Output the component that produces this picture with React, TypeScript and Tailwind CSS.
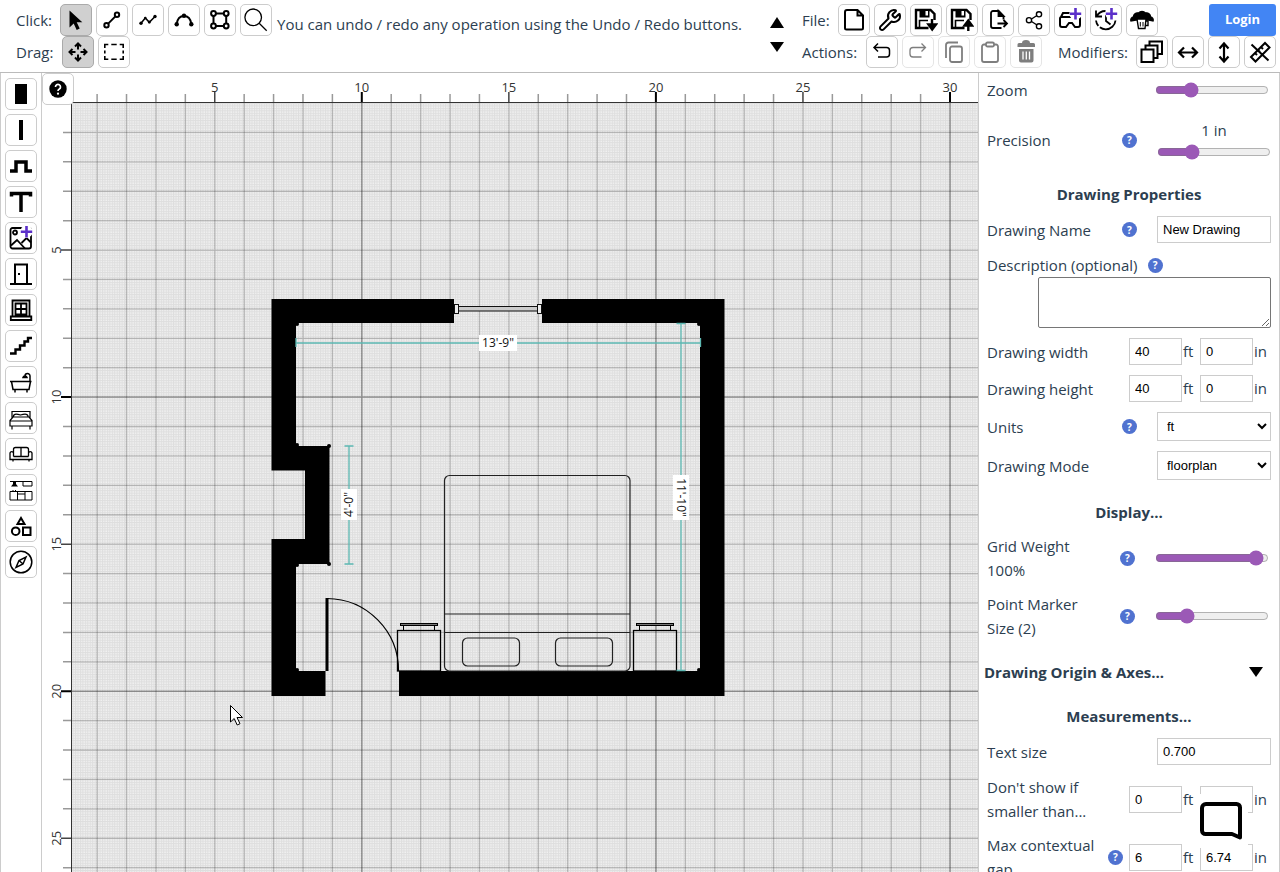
import { useState } from "react";
import type { ReactNode } from "react";
import { Wrench } from "lucide-react";

type ToolProps = {
  label: string;
  active?: boolean;
  disabled?: boolean;
  children: ReactNode;
};

const FOOT = 29.41;
const ORIGIN_X = 67.7;
const ORIGIN_Y = 103;
const FEET = Array.from({ length: 80 }, (_, i) => i + 1);
const LAST_LABEL_X = 30;
const LAST_LABEL_Y = 25;

const Tool: React.FC<ToolProps> = ({ label, active, disabled, children }) => (
  <button
    type="button"
    aria-label={label}
    disabled={disabled}
    className={`flex size-8 shrink-0 items-center justify-center rounded-[5px] border text-black ${
      active ? "border-[#aaa] bg-[#d0d0d0]" : "border-[#ccc] bg-white"
    } ${disabled ? "opacity-50" : ""}`}
  >
    {children}
  </button>
);

const Icon: React.FC<{ width?: number; children: ReactNode }> = ({
  width = 2,
  children,
}) => (
  <svg
    className="size-6"
    viewBox="0 0 24 24"
    fill="none"
    stroke="currentColor"
    strokeWidth={width}
  >
    {children}
  </svg>
);

const Plus: React.FC = () => (
  <g stroke="none">
    <circle cx="17.5" cy="5.7" r="6.2" fill="#fff" />
    <path d="M17.5 0v11.4M11.8 5.7h11.4" stroke="#5b2fc9" strokeWidth="2.6" />
  </g>
);

const Floppy: React.FC<{ children: ReactNode }> = ({ children }) => (
  <Icon width={2.4}>
    <path d="M20.500 12V6L16.500 2H2v18h12.500" />
    <path d="M5.500 2h10v7.500h-10z" fill="currentColor" stroke="none" />
    <path d="M11.500 3h2.500v4.500h-2.500z" fill="#fff" stroke="none" />
    <path d="M5.500 19v-6.500H14" strokeWidth="1.6" />
    {children}
  </Icon>
);

const Help: React.FC = () => (
  <button
    type="button"
    aria-label="Help"
    className="flex size-[15px] shrink-0 items-center justify-center rounded-full bg-[#5072d0] text-[10px] leading-none font-bold text-white"
  >
    ?
  </button>
);

const Heading: React.FC<{ children: ReactNode }> = ({ children }) => (
  <h2 className="mt-2.5 text-center leading-6 font-bold">{children}</h2>
);

const Row: React.FC<{
  label: string;
  htmlFor: string;
  help?: boolean;
  tight?: boolean;
  children: ReactNode;
}> = ({ label, htmlFor, help, tight, children }) => (
  <div className="flex items-center">
    <label htmlFor={htmlFor} className="max-w-[115px] leading-6">
      {label}
    </label>
    <div className={`ml-auto flex items-center ${tight ? "gap-1.5" : "gap-5"}`}>
      {help && <Help />}
      {children}
    </div>
  </div>
);

const Slider: React.FC<{ id: string; start: number }> = ({ id, start }) => {
  const [value, setValue] = useState<number>(start);
  return (
    <input
      id={id}
      type="range"
      min={0}
      max={100}
      value={value}
      onChange={(e) => setValue(Number(e.target.value))}
      className="h-4 w-[114px] accent-[#9b59b6]"
    />
  );
};

const TextField: React.FC<{ id: string; value: string }> = ({ id, value }) => (
  <input
    id={id}
    type="text"
    defaultValue={value}
    className="h-[27px] w-[114px] border border-[#ccc] bg-white px-[5px] font-['Liberation_Sans',sans-serif] text-[13px] text-black"
  />
);

const FeetField: React.FC<{ id: string; feet: string; inches: string }> = ({
  id,
  feet,
  inches,
}) => (
  <div className="flex w-[142px] items-center">
    <input
      id={id}
      type="text"
      defaultValue={feet}
      className="h-[27px] w-[53px] border border-[#ccc] bg-white px-[5px] font-['Liberation_Sans',sans-serif] text-[13px] text-black"
    />
    <span className="w-[18px] pl-px">ft</span>
    <input
      aria-label={`${id} inches`}
      type="text"
      defaultValue={inches}
      className="h-[27px] w-[53px] border border-[#ccc] bg-white px-[5px] font-['Liberation_Sans',sans-serif] text-[13px] text-black"
    />
    <span className="pl-px">in</span>
  </div>
);

const Select: React.FC<{ id: string; options: string[] }> = ({
  id,
  options,
}) => (
  <select
    id={id}
    className="h-[29px] w-[114px] border border-[#ccc] bg-white pl-[5px] font-['Liberation_Sans',sans-serif] text-[13px] text-black"
  >
    {options.map((option) => (
      <option key={option}>{option}</option>
    ))}
  </select>
);

const Toolbar: React.FC = () => (
  <header className="flex h-[73px] shrink-0 items-start border-b border-[#bbb] pt-1 pr-1 pl-4 whitespace-nowrap">
    <div>
      <div className="flex items-center gap-1">
        <span className="w-10">Click:</span>
        <Tool label="Select" active>
          <Icon>
            <path
              d="M5.500 2.500v17l4.200-4 3 6.500 3-1.400-3-6.300h5.600z"
              fill="currentColor"
              stroke="none"
            />
          </Icon>
        </Tool>
        <Tool label="Line">
          <Icon>
            <circle cx="6.5" cy="17.3" r="2.2" />
            <circle cx="17" cy="6.7" r="2.2" />
            <path d="M8.200 15.600l7.200-7.200" />
          </Icon>
        </Tool>
        <Tool label="Polyline">
          <Icon width={1.5}>
            <path d="M5 15.300l4.300-5.300 4 4.300L19 8.500" />
            <g fill="currentColor" stroke="none">
              <circle cx="5" cy="15.3" r="1.7" />
              <circle cx="9.3" cy="10" r="1.3" />
              <circle cx="13.3" cy="14" r="1.5" />
              <circle cx="19" cy="8.5" r="1.7" />
            </g>
          </Icon>
        </Tool>
        <Tool label="Arc">
          <Icon>
            <path d="M4.500 16.300C5.500 10 8.300 8 12 8s6.500 2 7.500 8.300" />
            <g fill="currentColor" stroke="none">
              <circle cx="4.7" cy="16.3" r="2.2" />
              <circle cx="12" cy="7.7" r="2.2" />
              <circle cx="19.3" cy="16.3" r="2.2" />
            </g>
          </Icon>
        </Tool>
        <Tool label="Area">
          <Icon>
            <path d="M8 5.500h8M8 18h8M5.500 8v7.500M18.200 8v7.500" />
            <circle cx="5.5" cy="5.5" r="2.4" />
            <circle cx="18.2" cy="5.5" r="2.4" />
            <circle cx="5.5" cy="18" r="2.4" />
            <circle cx="18.2" cy="18" r="2.4" />
          </Icon>
        </Tool>
        <Tool label="Search">
          <Icon width={1.3}>
            <circle cx="9.2" cy="9.3" r="8.3" />
            <path d="M15.200 15.300l7.500 7.500" />
          </Icon>
        </Tool>
      </div>
      <div className="flex items-center gap-1">
        <span className="w-[42px]">Drag:</span>
        <Tool label="Pan" active>
          <Icon>
            <path d="M12 3.500v6M12 14.500v6M3.500 12h6M14.500 12h6M9 6.500l3-3 3 3M9 17.500l3 3 3-3M6.500 9l-3 3 3 3M17.500 9l3 3-3 3" />
          </Icon>
        </Tool>
        <Tool label="Box select">
          <Icon width={1.6}>
            <path d="M2.800 8V4.500h3.500M9.300 4.500h5.400M17.700 4.500h3.500V8M21.200 10.500v3M21.200 16v3.300h-3.500M14.700 19.300H9.300M6.300 19.300H2.800V16M2.800 13.500v-3" />
          </Icon>
        </Tool>
      </div>
    </div>
    <p className="mt-2 min-w-0 flex-1 overflow-hidden pl-[5px] leading-6">
      You can undo / redo any operation using the Undo / Redo buttons.
    </p>
    <div className="mt-[13px] mr-[18px] flex flex-col gap-3">
      <button type="button" aria-label="Previous tip">
        <svg className="block h-3 w-3.5" viewBox="0 0 14 12">
          <path d="M7 0l7 11H0z" />
        </svg>
      </button>
      <button type="button" aria-label="Next tip">
        <svg className="block h-3 w-3.5" viewBox="0 0 14 12">
          <path d="M7 11l7-10H0z" />
        </svg>
      </button>
    </div>
    <div className="w-[474px] shrink-0">
      <div className="flex items-center gap-1">
        <span className="w-8">File:</span>
        <Tool label="New">
          <Icon>
            <path d="M15.500 2H5a2 2 0 0 0-2 2v16a1.500 1.500 0 0 0 1.500 1.500h15A1.500 1.500 0 0 0 21 20V7.500zM15.500 2v5.500H21" />
          </Icon>
        </Tool>
        <Tool label="Settings">
          <Wrench className="size-6" strokeWidth={2} />
        </Tool>
        <Tool label="Save">
          <Floppy>
            <path d="M18 11v6M14.500 16.500l3.700 5 3.800-5z" fill="currentColor" />
          </Floppy>
        </Tool>
        <Tool label="Load">
          <Floppy>
            <path d="M18.300 23v-7M14.500 17.500l3.800-5 3.700 5z" fill="currentColor" />
          </Floppy>
        </Tool>
        <Tool label="Export">
          <Icon width={1.8}>
            <path d="M17.500 11.500V8l-5-5H7a2 2 0 0 0-2 2v13a2 2 0 0 0 2 2h8.500" />
            <path d="M12.500 3v5h5z" fill="currentColor" />
            <path d="M11.500 15.500h9M17.500 12l3.500 3.500-3.500 3.500" />
          </Icon>
        </Tool>
        <Tool label="Share">
          <Icon width={1.4}>
            <path d="M9.500 11l5.500-3.500M9.500 13.500l5.500 3.500" />
            <circle cx="7" cy="12.2" r="2.6" />
            <circle cx="17" cy="6.3" r="2.6" />
            <circle cx="17" cy="18.3" r="2.6" />
          </Icon>
        </Tool>
        <Tool label="New 3D view">
          <Icon>
            <path d="M3 9l2-4h9M3 9h17.500a1.500 1.500 0 0 1 1.500 1.500V17a2 2 0 0 1-2 2h-3l-3-4h-3l-3 4H4a2 2 0 0 1-2-2v-6.500A1.500 1.500 0 0 1 3 9z" />
            <Plus />
          </Icon>
        </Tool>
        <Tool label="New version">
          <Icon width={1.8}>
            <path d="M2 2.500v6h6M2.500 8.500C4.500 5 7.500 3 11.500 3" />
            <path d="M2 12.500a9.800 9.800 0 0 0 19.500 0" strokeDasharray="6 2 30" />
            <path d="M12 7v6l4.500 3.500" />
            <Plus />
          </Icon>
        </Tool>
        <Tool label="Print shop">
          <Icon width={1.4}>
            <path
              d="M1 13a3 3 0 0 1 2.500-4 4 4 0 0 1 5-4 5 5 0 0 1 7 0 4 4 0 0 1 5 4 3 3 0 0 1 2.500 4l-4-1H6z"
              fill="currentColor"
            />
            <path d="M7 11h9l-1 9.500H8.500zM16 13h2v4.500h-2.500" fill="#fff" />
            <path d="M10.300 14v4.500M13 14v4.500" strokeWidth="1" />
          </Icon>
        </Tool>
        <button
          type="button"
          className="ml-auto h-8 w-[67px] rounded-[3px] bg-[#4285f4] text-[13px] font-bold text-white"
        >
          Login
        </button>
      </div>
      <div className="flex items-center gap-1">
        <span className="w-[60px]">Actions:</span>
        <Tool label="Undo">
          <Icon width={1.5}>
            <path d="M8 3.500l-4 4 4 4M4 7.500h12.500a3 3 0 0 1 3 3V14a3 3 0 0 1-3 3H8" />
          </Icon>
        </Tool>
        <Tool label="Redo" disabled>
          <Icon width={1.3}>
            <path d="M15.500 3.500l4 4-4 4M19.500 7.500H7a3 3 0 0 0-3 3V14a3 3 0 0 0 3 3h8.500" />
          </Icon>
        </Tool>
        <Tool label="Copy" disabled>
          <Icon width={1.8}>
            <rect x="8" y="6.5" width="12" height="15.5" rx="2" />
            <path d="M4 18V5a2.500 2.500 0 0 1 2.500-2.500H16" />
          </Icon>
        </Tool>
        <Tool label="Paste" disabled>
          <Icon width={1.8}>
            <path d="M8 4.500H6a2 2 0 0 0-2 2V20a2 2 0 0 0 2 2h12a2 2 0 0 0 2-2V6.500a2 2 0 0 0-2-2h-2" />
            <rect x="8" y="2.5" width="8" height="4" rx="1.5" />
          </Icon>
        </Tool>
        <Tool label="Delete" disabled>
          <Icon>
            <path
              d="M3.500 4.500A1.500 1.500 0 0 1 5 3h3a4 3 0 0 1 8 0h3.500A1.500 1.500 0 0 1 21 4.500V7H3.500zM5 9h14.500v11.500a2 2 0 0 1-2 2H7a2 2 0 0 1-2-2z"
              fill="currentColor"
              stroke="none"
            />
            <path d="M9 11.500v8M12.300 11.500v8M15.500 11.500v8" stroke="#fff" strokeWidth="1.3" />
          </Icon>
        </Tool>
        <span className="mr-1 ml-auto">Modifiers:</span>
        <Tool label="Duplicate">
          <Icon>
            <path d="M9.500 6V1.500H22V14h-4M5.500 9.500v-4h12V18H14" />
            <rect x="1.5" y="9.5" width="12" height="12.5" />
          </Icon>
        </Tool>
        <Tool label="Flip horizontally">
          <Icon width={2.2}>
            <path d="M4 12.500h16M8 7.500l-5 5 5 5M16 7.500l5 5-5 5" />
          </Icon>
        </Tool>
        <Tool label="Flip vertically">
          <Icon width={2.2}>
            <path d="M12 4v17M7.500 8.500l4.500-5 4.500 5M7.500 16.500l4.500 5 4.500-5" />
          </Icon>
        </Tool>
        <Tool label="Hide measurements">
          <Icon>
            <path d="M3 17L17 3l4.500 4.500-14 14zM3.500 4.500l17 16M13 7l2 2M10 10l2 2M7 13l2 2" />
          </Icon>
        </Tool>
      </div>
    </div>
  </header>
);

const Palette: React.FC = () => (
  <nav className="flex w-[42px] shrink-0 flex-col items-center gap-1 border-x border-[#ccc] pt-[5px]">
    <Tool label="Wall">
      <Icon>
        <path d="M6 2h12v20H6z" fill="currentColor" stroke="none" />
      </Icon>
    </Tool>
    <Tool label="Thin wall">
      <Icon>
        <path d="M10 2h4v20h-4z" fill="currentColor" stroke="none" />
      </Icon>
    </Tool>
    <Tool label="Wall outline">
      <Icon width={3.5}>
        <path d="M1 17h6V8h10v9h6" />
      </Icon>
    </Tool>
    <Tool label="Text">
      <Icon width={3.5}>
        <path d="M2.500 6.500v-3h19v3M12 3.500V22" />
      </Icon>
    </Tool>
    <Tool label="Add image">
      <Icon width={1.8}>
        <rect x="1.5" y="2" width="20.5" height="20.5" rx="2" />
        <circle cx="6" cy="6.5" r="2" />
        <path d="M2 19.500l6-5.500 8 8.500M12.500 17l5-5 4.500 4.500" />
        <Plus />
      </Icon>
    </Tool>
    <Tool label="Door">
      <Icon>
        <path d="M6 22V2.500h12V22M1 22h22" />
        <path d="M9 11h2v2H9z" fill="currentColor" stroke="none" />
      </Icon>
    </Tool>
    <Tool label="Window">
      <Icon width={1.8}>
        <path d="M3.500 18.500v-16h17v16M1.800 18.500h20.500V22H1.800zM6.500 5.500h11v11h-11zM12 5.500v11M6.500 11h11" />
      </Icon>
    </Tool>
    <Tool label="Stairs">
      <Icon width={2.4}>
        <path d="M1 19.500h5.500v-4H11v-4h4.500v-4H19V4h4" />
      </Icon>
    </Tool>
    <Tool label="Bathroom">
      <Icon width={1.5}>
        <path d="M1 11.500h21.500M2.500 11.500l1.500 8h16l1.500-8M6 20v2.500M18 20v2.500M21 11V6a2.500 2.500 0 0 0-5 0M14 7.500c.5-2 3.500-2 4 0z" />
      </Icon>
    </Tool>
    <Tool label="Bedroom">
      <Icon width={1.2}>
        <path d="M3 13V5.500h18V13M1 14.500L4 11h16l3 3.500V20H1zM1 15h22M3 20v3.500M21 20v3.500M4.500 11c-.5-3 2-3.500 7-2 5-1.500 8-1 7.500 2" />
      </Icon>
    </Tool>
    <Tool label="Living room">
      <Icon width={1.3}>
        <path d="M4.500 13V7.500a2 2 0 0 1 2-2h11a2 2 0 0 1 2 2V13M12 5.500v9M4.500 14.500h15M4.500 14.500V11A1.800 1.800 0 0 0 1 11v6.500h22V11a1.800 1.800 0 0 0-3.500 0v3.500M4 18v1.500M20 18v1.500" />
      </Icon>
    </Tool>
    <Tool label="Kitchen">
      <Icon width={1}>
        <path d="M1 3.500h22M14 3.500V8h9V3.500M1 13.500h22V22H1zM8.500 13.500V22M16 13.500V22M8.500 16H16M4 12v1.500M6.500 12v1.500" />
        <path d="M2 8.500L4 6V3.500h3V6l2 2.500z" fill="currentColor" stroke="none" />
      </Icon>
    </Tool>
    <Tool label="Shapes">
      <Icon>
        <path d="M12 4l3.500 6h-7zM14 13.500h7.500V21H14z" />
        <circle cx="6.7" cy="17.2" r="3.8" />
      </Icon>
    </Tool>
    <Tool label="Compass">
      <Icon width={1.5}>
        <circle cx="12" cy="12" r="10.8" />
        <path d="M17 7l-3 7-7 3.500 3-7zM10 10.500l4 3.500" />
      </Icon>
    </Tool>
  </nav>
);

const Measure: React.FC<{
  x: number;
  y: number;
  turn: number;
  text: string;
  width: number;
}> = ({ x, y, turn, text, width }) => (
  <g transform={`translate(${x} ${y}) rotate(${turn})`}>
    <rect x={-width / 2} y="-8" width={width} height="16" fill="#fff" />
    <text y="4" textAnchor="middle" fontSize="12" fill="#111">
      {text}
    </text>
  </g>
);

const Nightstand: React.FC<{ x: number }> = ({ x }) => (
  <g fill="none" stroke="#000">
    <rect x={x} y="630.5" width="43" height="40.5" strokeWidth="1.3" />
    <rect x={x + 3} y="623.5" width="37" height="2" fill="#777" />
    <path d={`M${x + 6} 626v4M${x + 37} 626v4`} />
  </g>
);

const Plan: React.FC = () => (
  <svg
    className="block h-full w-full font-['Open_Sans','Noto_Sans',sans-serif]"
    role="img"
    aria-label="Floor plan"
  >
    <defs>
      <pattern
        id="inches"
        x={ORIGIN_X}
        y={ORIGIN_Y}
        width={FOOT / 12}
        height={FOOT / 12}
        patternUnits="userSpaceOnUse"
      >
        <rect width="3" height="3" fill="#f1f1f1" />
        <path d="M0 .5h3M.5 0v3" stroke="#dedede" />
      </pattern>
    </defs>
    <g transform="translate(-42 -73)">
      <rect x="72" y="103" width="3000" height="3000" fill="url(#inches)" />
      {FEET.map((n) => {
        const x = ORIGIN_X + n * FOOT;
        const y = ORIGIN_Y + n * FOOT;
        const ten = n % 10 === 0;
        const five = n % 5 === 0;
        return (
          <g key={n}>
            <path
              d={`M${x} 103v3000M72 ${y}h3000`}
              stroke="#000"
              strokeOpacity={ten ? 0.38 : 0.2}
              strokeWidth={ten ? 1.5 : 1.3}
            />
            <path
              d={`M${x} ${five ? 92 : 94}V103M${five ? 61 : 63} ${y}H72`}
              stroke={ten ? "#000" : five ? "#444" : "#999"}
              strokeWidth={ten ? 2 : 1.5}
            />
            <g textAnchor="middle" fontSize="13" fill="#333">
              {five && n <= LAST_LABEL_X && (
                <text x={x} y="92">
                  {n}
                </text>
              )}
              {five && n <= LAST_LABEL_Y && (
                <text transform={`translate(61 ${y}) rotate(-90)`}>{n}</text>
              )}
            </g>
          </g>
        );
      })}
      <path d="M3000 102.500H71.500V3000" fill="none" stroke="#333" />

      <path d="M454 299H271.500V470.500H305V539H271.500V696H325.500V671H296V564H329.500V446H296V323H454zM542 299H724.500V696H399V671H700V323H542z" />
      {[
        [329, 446],
        [329, 564],
        [297, 324],
        [699, 324],
        [297, 445],
        [297, 565],
        [297, 670],
        [699, 670],
      ].map(([cx, cy]) => (
        <circle key={`${cx}-${cy}`} cx={cx} cy={cy} r="2" />
      ))}

      <g stroke="#111">
        <rect x="458" y="306.5" width="80" height="4.5" fill="#ccc" />
        <rect x="454.5" y="304.5" width="4" height="9" fill="#eee" />
        <rect x="537.5" y="304.5" width="4" height="9" fill="#eee" />
      </g>

      <rect x="325.5" y="598" width="3" height="73" />
      <path
        d="M327 598.500a72 72 0 0 1 71.500 72.500"
        fill="none"
        stroke="#000"
        strokeWidth="1.2"
      />
      <Nightstand x={397.5} />
      <Nightstand x={633.5} />
      <g fill="none" stroke="#222" strokeWidth="1.2">
        <rect x="444.5" y="475.5" width="185.5" height="195.5" rx="5" />
        <path d="M444.500 614H630M444.500 632.500H630" />
        <rect x="462.5" y="638" width="57" height="28" rx="5" />
        <rect x="555.5" y="638" width="57" height="28" rx="5" />
      </g>

      <g fill="none" stroke="#5cb8b2" strokeWidth="1.3">
        <path d="M296 343h404.500M296 338v9M700.500 338v9" />
        <path d="M349 446v118M344.500 446h9M344.500 564h9" />
        <path d="M681 323v348M676.500 323.500h9M676.500 670.500h9" />
      </g>
      <Measure x={498} y={343} turn={0} text={`13'-9"`} width={38} />
      <Measure x={349} y={504.5} turn={-90} text={`4'-0"`} width={31} />
      <Measure x={681} y={497.5} turn={90} text={`11'-10"`} width={45} />

      <path
        d="M230.500 705.500v16.500l3.700-3.500 3 6.500 2.800-1.300-3-6.200h5.500z"
        fill="#fff"
        stroke="#000"
      />
    </g>
  </svg>
);

const Properties: React.FC = () => (
  <aside className="flex w-[302px] shrink-0 flex-col gap-2.5 overflow-hidden border-x border-[#ccc] px-2 pt-[5px]">
    <Row label="Zoom" htmlFor="zoom">
      <div className="flex pr-0.5">
        <Slider id="zoom" start={29} />
      </div>
    </Row>
    <div className="pt-1.5">
      <Row label="Precision" htmlFor="precision" help>
        <div className="flex w-[114px] flex-col items-center">
          <span className="leading-6">1 in</span>
          <div className="flex h-5 items-center">
            <Slider id="precision" start={28} />
          </div>
        </div>
      </Row>
    </div>

    <Heading>Drawing Properties</Heading>
    <Row label="Drawing Name" htmlFor="name" help>
      <TextField id="name" value="New Drawing" />
    </Row>
    <div>
      <div className="flex h-6 items-center gap-2.5">
        <label htmlFor="description">Description (optional)</label>
        <Help />
      </div>
      <textarea
        id="description"
        className="ml-auto block h-[51px] w-[233px] rounded-[2px] border border-[#767676] bg-white"
      />
    </div>
    <Row label="Drawing width" htmlFor="width">
      <FeetField id="width" feet="40" inches="0" />
    </Row>
    <Row label="Drawing height" htmlFor="height">
      <FeetField id="height" feet="40" inches="0" />
    </Row>
    <Row label="Units" htmlFor="units" help>
      <Select id="units" options={["ft", "m", "cm", "mm"]} />
    </Row>
    <Row label="Drawing Mode" htmlFor="mode">
      <Select id="mode" options={["floorplan", "elevation"]} />
    </Row>

    <Heading>Display...</Heading>
    <Row label="Grid Weight 100%" htmlFor="grid" help>
      <div className="flex pr-0.5">
        <Slider id="grid" start={95} />
      </div>
    </Row>
    <Row label="Point Marker Size (2)" htmlFor="marker" help>
      <div className="flex pr-0.5">
        <Slider id="marker" start={24} />
      </div>
    </Row>

    <button
      type="button"
      className="mt-2.5 -ml-[3px] flex h-6 items-center justify-between pr-2 leading-6 font-bold"
    >
      Drawing Origin &amp; Axes...
      <svg className="h-2.5 w-3.5" viewBox="0 0 14 10">
        <path d="M0 0h14L7 10z" fill="#000" />
      </svg>
    </button>

    <Heading>Measurements...</Heading>
    <Row label="Text size" htmlFor="textsize">
      <TextField id="textsize" value="0.700" />
    </Row>
    <Row label="Don't show if smaller than..." htmlFor="smaller">
      <FeetField id="smaller" feet="0" inches="" />
    </Row>
    <Row label="Max contextual gap" htmlFor="gap" help tight>
      <FeetField id="gap" feet="6" inches="6.74" />
    </Row>
  </aside>
);

const App: React.FC = () => (
  <div className="relative flex h-screen flex-col overflow-hidden bg-white font-['Open_Sans','Noto_Sans',sans-serif] text-[15px] text-[#2c3e50]">
    <Toolbar />
    <div className="flex min-h-0 flex-1">
      <Palette />
      <main className="relative min-w-0 flex-1 overflow-hidden">
        <Plan />
        <button
          type="button"
          aria-label="Show help"
          className="absolute top-0 left-0 flex size-8 items-center justify-center rounded-[5px] border border-[#ccc] bg-white"
        >
          <svg className="size-[18px]" viewBox="0 0 18 18">
            <circle cx="9" cy="9" r="8.7" fill="#000" />
            <path
              d="M6.500 7a2.500 2.500 0 1 1 3.800 2.100c-.9.500-1.300.9-1.300 2"
              fill="none"
              stroke="#fff"
              strokeWidth="1.7"
            />
            <circle cx="9" cy="13.7" r="1.1" fill="#fff" />
          </svg>
        </button>
      </main>
      <Properties />
    </div>
    <button
      type="button"
      aria-label="Chat"
      className="absolute right-8 bottom-6 flex h-[54px] w-12 items-center bg-white"
    >
      <svg className="h-[38px] w-[42px]" viewBox="0 0 42 38" fill="none">
        <path
          d="M6 2h30.500a3.500 3.500 0 0 1 3.500 3.500v30L32 32H5.500A3.500 3.500 0 0 1 2 28.500V6a4 4 0 0 1 4-4z"
          stroke="#000"
          strokeWidth="4"
          strokeLinejoin="round"
        />
      </svg>
    </button>
  </div>
);

export default App;
